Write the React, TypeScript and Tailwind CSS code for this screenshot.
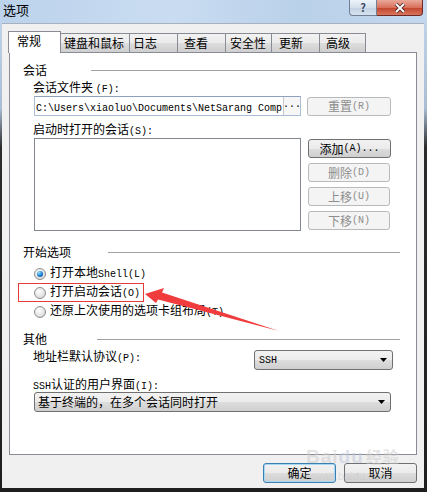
import React from 'react';

const G = 'bg-[linear-gradient(#f2f2f2,#ebebeb_50%,#dddddd_51%,#cfcfcf)]';

const M: React.FC<{ children: React.ReactNode }> = ({ children }) => (
  <span className="font-['Liberation_Mono',monospace] text-[10px]">{children}</span>
);

const Btn: React.FC<{ children: React.ReactNode; disabled?: boolean; className?: string }> = ({ children, disabled, className = '' }) => (
  <div
    className={`h-[19px] flex items-center justify-center rounded-[3px] border ${
      disabled ? 'border-[#b7babc] bg-[#f4f4f4] text-[#8d8d8d]' : `border-[#707070] ${G} text-black`
    } ${className}`}
  >
    {children}
  </div>
);

const Header: React.FC<{ label: string; gap: string }> = ({ label, gap }) => (
  <div className="flex items-center h-[12px] pl-[13px] pr-[16px]">
    <span className="leading-[12px]">{label}</span>
    <div className={`flex-1 h-px bg-[#a0a0a0] ${gap}`} />
  </div>
);

const Radio: React.FC<{ checked?: boolean }> = ({ checked }) => (
  <span className="w-[12px] h-[12px] rounded-full border border-[#8e8f8f] bg-[radial-gradient(circle_at_40%_35%,#ffffff,#e2e2e2_60%,#c8c8c8)] flex items-center justify-center">
    {checked && <span className="w-[6px] h-[6px] rounded-full bg-[radial-gradient(circle_at_35%_30%,#9be0ff,#1a7bd0_55%,#0a3f7a)]" />}
  </span>
);

const RadioRow: React.FC<{ checked?: boolean; children: React.ReactNode }> = ({ checked, children }) => (
  <div className="h-[19px] flex items-center pl-[24px] gap-[4px]">
    <Radio checked={checked} />
    <span className="leading-[12px]">{children}</span>
  </div>
);

const Arrow = () => (
  <svg width="7" height="4" viewBox="0 0 7 4">
    <path d="M0 0h7L3.5 4z" fill="#000" />
  </svg>
);

const tabs = [
  { label: '键盘和鼠标', w: 'w-[70px]', pl: 'pl-[3px]' },
  { label: '日志', w: 'w-[49px]', pl: 'pl-[3px]' },
  { label: '查看', w: 'w-[49px]', pl: 'pl-[6px]' },
  { label: '安全性', w: 'w-[47px]', pl: 'pl-[4px]' },
  { label: '更新', w: 'w-[49px]', pl: 'pl-[7px]' },
  { label: '高级', w: 'w-[47px]', pl: 'pl-[6px]' },
];

export default function App() {
  return (
    <div className="relative w-[427px] h-[492px] overflow-hidden flex flex-col text-[12px] text-black font-['Noto_Sans_CJK_SC','Liberation_Sans',sans-serif] bg-[linear-gradient(to_bottom,#c4d8ee_0%,#a9bdd4_22%,#2b2b2b_30%,#1f1f1f_100%)]">
      {/* title bar */}
      <div className="h-[23px] flex items-start justify-between bg-[linear-gradient(90deg,#bcd3ec,#c9dcf1_40%,#bad1ea_70%,#c3d7ee)]">
        <span className="pl-[3px] pt-[2px] text-[13px] leading-[16px]">选项</span>
        <div className="flex mr-[4px]">
          <div className="w-[28px] h-[16px] rounded-bl-[4px] border border-t-0 border-[#6f7f96] bg-[linear-gradient(#eef3f9,#d4dfec_50%,#c2d0e1_51%,#d6e2ef)] flex items-center justify-center text-[11px] font-bold text-[#3b4b63] leading-none">
            ?
          </div>
          <div className="w-[46px] h-[16px] rounded-br-[4px] border border-t-0 border-l-0 border-[#6e2a22] bg-[linear-gradient(#e9a99a,#d9705c_50%,#c2412b_51%,#d8765e)] flex items-center justify-center">
            <svg width="12" height="10" viewBox="0 0 12 10">
              <path d="M2 1l8 8M10 1l-8 8" stroke="#3a1a14" strokeWidth="3.4" />
              <path d="M2 1l8 8M10 1l-8 8" stroke="#fff" strokeWidth="2" />
            </svg>
          </div>
        </div>
      </div>

      {/* body */}
      <div className="ml-[2px] mr-[3px] mb-[4px] flex-1 bg-[#f0f0f0] border-t border-[#a7b2c0] pl-[6px] pt-[7px] flex flex-col">
        {/* tabs */}
        <div className="flex items-end h-[22px]">
          <div className="relative z-10 w-[53px] h-[22px] bg-white border border-b-0 border-[#898c95] pl-[8px] pb-[3px] flex items-center">
            常规
          </div>
          {tabs.map((t) => (
            <div
              key={t.label}
              className={`${t.w} ${t.pl} h-[20px] -ml-px border border-[#898c95] flex items-center ${G.replace('', '')} bg-[linear-gradient(#f2f2f2,#ebebeb_50%,#dddddd_51%,#cfcfcf)]`}
            >
              {t.label}
            </div>
          ))}
        </div>

        {/* panel */}
        <div className="ml-[1px] -mt-px w-[408px] h-[403px] border border-[#898c95] bg-white flex flex-col">
          <div className="mt-[11px]">
            <Header label="会话" gap="ml-[44px]" />
          </div>
          <div className="mt-[5px] pl-[23px] h-[12px] leading-[12px]">
            会话文件夹 <M>(F):</M>
          </div>
          <div className="mt-[3px] pl-[24px] flex items-center gap-[6px]">
            <div className="w-[267px] h-[20px] border border-[#abbdd6] border-t-[#8ea2bf] bg-white flex items-center overflow-hidden">
              <div className="flex-1 overflow-hidden whitespace-nowrap pl-[1px]">
                <M>C:\Users\xiaoluo\Documents\NetSarang Comp</M>
              </div>
              <div className="w-[17px] h-[18px] border-l border-[#c8c8c8] bg-[#f6f6f6] flex items-end justify-center pb-[3px]">
                <M>...</M>
              </div>
            </div>
            <Btn disabled className="w-[84px]">
              重置<M>(R)</M>
            </Btn>
          </div>
          <div className="mt-[7px] pl-[23px] h-[12px] leading-[12px]">
            启动时打开的会话<M>(S):</M>
          </div>
          <div className="mt-[3px] pl-[24px] flex gap-[7px]">
            <div className="w-[267px] h-[93px] border border-[#828790] bg-white" />
            <div className="flex flex-col gap-[5px] pt-[1px]">
              <Btn className="w-[83px]">
                添加<M>(A)...</M>
              </Btn>
              <Btn disabled className="w-[82px]">
                删除<M>(D)</M>
              </Btn>
              <Btn disabled className="w-[82px]">
                上移<M>(U)</M>
              </Btn>
              <Btn disabled className="w-[82px]">
                下移<M>(N)</M>
              </Btn>
            </div>
          </div>

          <div className="mt-[15px]">
            <Header label="开始选项" gap="ml-[37px]" />
          </div>
          <div className="mt-[6px]">
            <RadioRow checked>
              打开本地<M>Shell(L)</M>
            </RadioRow>
            <RadioRow>
              打开启动会话<M>(O)</M>
            </RadioRow>
            <RadioRow>
              还原上次使用的选项卡组布局<M>(T)</M>
            </RadioRow>
          </div>

          <div className="mt-[12px]">
            <Header label="其他" gap="ml-[50px]" />
          </div>
          <div className="mt-[5px] pl-[23px] pr-[23px] flex items-center justify-between">
            <span className="leading-[12px] -mt-[6px]">
              地址栏默认协议<M>(P):</M>
            </span>
            <div className={`w-[139px] h-[20px] rounded-[3px] border border-[#707070] ${G} flex items-center justify-between pl-[4px] pr-[5px]`}>
              <M>SSH</M>
              <Arrow />
            </div>
          </div>
          <div className="mt-[8px] pl-[23px] h-[12px] leading-[12px]">
            <M>SSH</M>认证的用户界面<M>(I):</M>
          </div>
          <div className="mt-[2px] pl-[24px]">
            <div className={`w-[357px] h-[20px] rounded-[3px] border border-[#707070] ${G} flex items-center justify-between pl-[3px] pr-[5px]`}>
              <span className="leading-[12px]">基于终端的，在多个会话同时打开</span>
              <Arrow />
            </div>
          </div>
        </div>

        {/* dialog buttons */}
        <div className="mt-[8px] flex justify-end gap-[8px] pr-[7px]">
          <div className={`w-[73px] h-[20px] rounded-[3px] border border-[#3c7fb1] ${G} shadow-[inset_0_0_0_1px_#a6d8f5] flex items-center justify-center`}>
            确定
          </div>
          <div className={`w-[73px] h-[20px] rounded-[3px] border border-[#707070] ${G} flex items-center justify-center`}>
            取消
          </div>
        </div>
      </div>

      {/* annotation overlays */}
      <div className="absolute left-[18px] top-[283px] w-[126px] h-[19px] border border-[#e53b3b] pointer-events-none" />
      <svg className="absolute left-0 top-0 pointer-events-none" width="427" height="492" viewBox="0 0 427 492">
        <polygon points="145,294 164,288 162,292.5 279,331 158,299.5 156,303" fill="#f03c3c" />
      </svg>
      <div className="absolute left-[306px] top-[446px] pointer-events-none text-[rgba(205,205,205,0.55)] font-['Liberation_Sans',sans-serif] font-bold text-[19px] leading-[20px] tracking-[1px]">
        Bai<span className="text-[rgba(190,200,220,0.55)]">du</span>
        <span className="font-['Noto_Sans_CJK_SC',sans-serif] text-[16px] ml-[2px]">经验</span>
      </div>
      <div className="absolute left-[300px] top-[470px] pointer-events-none text-[rgba(200,200,200,0.5)] font-['Liberation_Sans',sans-serif] text-[11px] leading-[12px]">
        jingyan.baidu.com
      </div>
    </div>
  );
}
